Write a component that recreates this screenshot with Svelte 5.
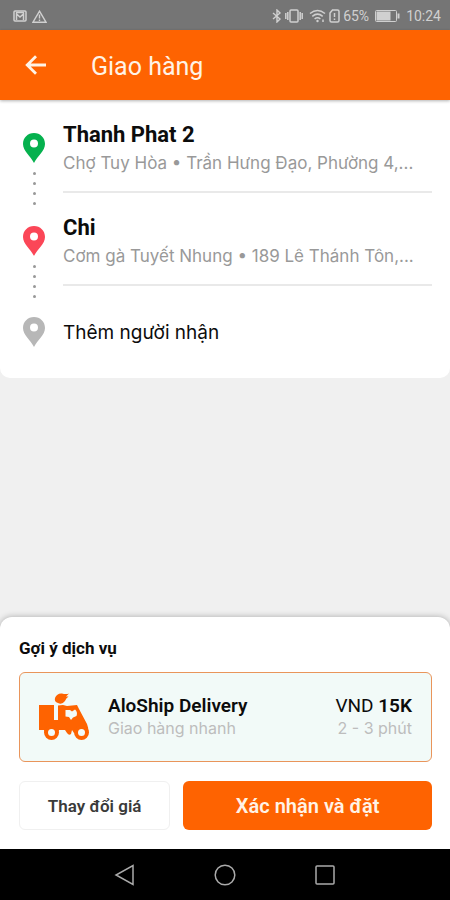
<script lang="ts">
  type Stop = { name: string; address: string; color: string };

  const stops: Stop[] = [
    { name: 'Thanh Phat 2', address: 'Chợ Tuy Hòa • Trần Hưng Đạo, Phường 4,...', color: '#05b14e' },
    { name: 'Chi', address: 'Cơm gà Tuyết Nhung • 189 Lê Thánh Tôn,...', color: '#fb4657' },
  ];

  const dots = [0, 1, 2, 3];
</script>

{#snippet pin(color: string)}
  <svg class="pin" viewBox="0 0 22 30" aria-hidden="true">
    <path
      fill={color}
      fill-rule="evenodd"
      d="M11 0C4.800 0 0 4.800 0 10.900C0 18 7.500 22.500 11 30C14.500 22.500 22 18 22 10.900C22 4.800 17.200 0 11 0ZM11 6.600a4 4 0 1 1 0 8a4 4 0 1 1 0-8Z"
    />
  </svg>
{/snippet}

<div class="screen">
  <div class="status-bar">
    <div class="status-group">
      <svg width="14" height="12" viewBox="0 0 14 12" fill="none" stroke="currentColor" stroke-width="1.5">
        <rect x="1" y="1" width="12" height="10" rx="1" />
        <path d="M3.500 10V4l3.500 3l3.500-3v6M3 2.500h8" />
      </svg>
      <svg width="15" height="13" viewBox="0 0 15 13" fill="none" stroke="currentColor" stroke-width="1.400">
        <path d="M7.500 1.200L14 12.200H1ZM7.500 4.500v4M7.500 9.500v1.500" />
      </svg>
    </div>
    <div class="status-group right">
      <svg width="10" height="14" viewBox="0 0 10 14" fill="none" stroke="currentColor" stroke-width="1.400">
        <path d="M1 4l7 6l-3 3V1l3 3l-7 6" />
      </svg>
      <svg width="18" height="14" viewBox="0 0 18 14" fill="none" stroke="currentColor" stroke-width="1.500">
        <rect x="5" y="1" width="8" height="12" rx="1" />
        <path d="M2.800 3v8M15.200 3v8M.8 4v6M17.200 4v6" />
      </svg>
      <svg class="wifi" width="17" height="14" viewBox="0 0 17 14" fill="none" stroke="currentColor" stroke-width="1.500">
        <path d="M1 4.500Q8.500-1.500 16 4.500M3.300 7.300Q8.500 3 13.700 7.300M5.600 10Q8.500 7.500 11.400 10M14 10.500v2.500" />
        <circle cx="8.500" cy="12" r="1.200" fill="currentColor" stroke="none" />
      </svg>
      <svg width="11" height="14" viewBox="0 0 11 14" fill="none" stroke="currentColor" stroke-width="1.500">
        <path d="M3.500 1h5a1.500 1.500 0 0 1 1.500 1.500v9a1.500 1.500 0 0 1-1.500 1.500h-6a1.500 1.500 0 0 1-1.500-1.500V4ZM5.500 4v4M5.500 9.500v1.500" />
      </svg>
      <span>65%</span>
      <svg class="battery" width="25" height="12" viewBox="0 0 25 12" fill="none" stroke="currentColor">
        <rect x=".5" y=".5" width="21" height="11" rx="1" />
        <rect x="2" y="2" width="13" height="8" fill="currentColor" />
        <path d="M23.500 3.500v5" stroke-width="2" />
      </svg>
      <span>10:24</span>
    </div>
  </div>

  <header class="app-bar">
    <button class="back" aria-label="Quay lại">
      <svg width="22" height="20" viewBox="0 0 22 20" fill="none" stroke="currentColor" stroke-width="2.800">
        <path d="M21 10H2.500M11 1.200L2.200 10L11 18.800" />
      </svg>
    </button>
    <h1>Giao hàng</h1>
  </header>

  <main class="stops">
    {#each stops as stop (stop.name)}
      <div class="stop">
        <div class="marker">
          {@render pin(stop.color)}
          <div class="dots">
            {#each dots as dot (dot)}
              <i></i>
            {/each}
          </div>
        </div>
        <div class="stop-info">
          <h2>{stop.name}</h2>
          <p>{stop.address}</p>
        </div>
      </div>
    {/each}
    <button class="add-stop">
      {@render pin('#b7b7b7')}
      <span>Thêm người nhận</span>
    </button>
  </main>

  <section class="sheet">
    <h3>Gợi ý dịch vụ</h3>
    <button class="service">
      <svg class="truck" viewBox="0 0 51 48" aria-hidden="true">
        <g fill="#fe6301">
          <path d="M1 12H16V27H20V12.500L25 12L29 13L39 12L41 16L49 31Q51 35 50 40H36L34 37L33 41Q31 43 29 40L27 37H21L19 40H7L6 37H1Z" />
          <circle cx="13.500" cy="39.500" r="7.500" />
          <circle cx="43.500" cy="39.500" r="7.500" />
          <path d="M17 5Q19 0 24 .5Q28 1.500 31 .5L28 3.500L30.500 3.500Q28 5 27 8Q24 12 20 10Q16 9 17 5Z" />
        </g>
        <path fill="#f2faf8" d="M27.500 17H32L34 18.500L37 16.500Q40 19 38.500 23L35 24.500L33 27L31 24L27.500 23.500Z" />
        <circle cx="13.500" cy="39.500" r="3.500" fill="#f2faf8" />
        <circle cx="43.500" cy="39.500" r="3.500" fill="#f2faf8" />
      </svg>
      <span class="service-name">
        <strong>AloShip Delivery</strong>
        <small>Giao hàng nhanh</small>
      </span>
      <span class="service-price">
        <span>VND <strong>15K</strong></span>
        <small>2 - 3 phút</small>
      </span>
    </button>
    <div class="actions">
      <button class="change">Thay đổi giá</button>
      <button class="confirm">Xác nhận và đặt</button>
    </div>
  </section>

  <nav class="nav-bar">
    <button aria-label="Back">
      <svg width="22" height="22" viewBox="0 0 22 22"><path d="M19 1.500v19L2 11Z" /></svg>
    </button>
    <button aria-label="Home">
      <svg width="22" height="22" viewBox="0 0 22 22"><circle cx="11" cy="11" r="9.800" /></svg>
    </button>
    <button aria-label="Recent">
      <svg width="22" height="22" viewBox="0 0 22 22"><rect x="2" y="2" width="18" height="18" rx="1" /></svg>
    </button>
  </nav>
</div>

<style>
  :global(body) {
    margin: 0;
  }
  .screen {
    min-height: 100vh;
    display: flex;
    flex-direction: column;
    background: #f0f0f0;
    font-family: Roboto, "Liberation Sans", sans-serif;
    color: #0c0c0c;
  }
  button {
    font: inherit;
    color: inherit;
    border: none;
    background: none;
    padding: 0;
    cursor: pointer;
  }
  svg {
    flex-shrink: 0;
  }
  h1,
  h2,
  h3,
  p {
    margin: 0;
  }

  /* Status bar */
  .status-bar {
    height: 30px;
    padding: 2px 9px 0 13px;
    box-sizing: border-box;
    display: flex;
    align-items: center;
    justify-content: space-between;
    background: #757575;
    color: #d0d0d0;
    font-size: 14px;
  }
  .status-group {
    display: flex;
    align-items: center;
    gap: 5px;
  }
  .status-group.right {
    gap: 3px;
  }
  .wifi {
    margin-left: 3px;
  }
  .battery {
    margin: 0 3px;
  }

  /* App bar */
  .app-bar {
    height: 70px;
    display: flex;
    align-items: center;
    gap: 44px;
    padding: 0 25px;
    background: #fe6301;
    color: #fff3e6;
    box-shadow: 0 1px 3px rgba(0, 0, 0, 0.3);
    z-index: 1;
  }
  .back {
    display: flex;
  }
  .app-bar h1 {
    font-size: 25px;
    font-weight: 400;
    line-height: 32px;
    padding-top: 4px;
  }

  /* Stops */
  .stops {
    background: #fff;
    border-radius: 0 0 10px 10px;
    padding: 0 18px 0 23px;
  }
  .stop {
    display: flex;
    gap: 18px;
  }
  .marker {
    width: 22px;
    padding-top: 33px;
    margin-bottom: -16px;
    flex-shrink: 0;
  }
  .pin {
    display: block;
    width: 22px;
    height: 30px;
  }
  .dots {
    display: flex;
    flex-direction: column;
    align-items: center;
    gap: 7px;
    padding-top: 9px;
  }
  .dots i {
    width: 3px;
    height: 3px;
    border-radius: 50%;
    background: #999;
  }
  .stop-info {
    flex: 1;
    min-width: 0;
    height: 93px;
    padding-top: 21px;
    box-sizing: border-box;
    border-bottom: 2px solid #e9e9e9;
  }
  .stop-info h2 {
    font-size: 22px;
    font-weight: 700;
    line-height: 28px;
  }
  .stop-info p {
    font-family: Inter, Roboto, sans-serif;
    font-size: 17px;
    line-height: 28px;
    color: #999;
    white-space: nowrap;
    overflow: hidden;
    text-overflow: ellipsis;
  }
  .add-stop {
    width: 100%;
    height: 92px;
    display: flex;
    align-items: center;
    gap: 18px;
    font-family: Inter, Roboto, sans-serif;
    font-size: 19px;
  }

  /* Bottom sheet */
  .sheet {
    margin-top: auto;
    padding: 17px 18px 19px 19px;
    background: #fff;
    border-radius: 12px 12px 0 0;
    box-shadow: 0 0 6px rgba(0, 0, 0, 0.3);
  }
  .sheet h3 {
    font-size: 17px;
    font-weight: 700;
    line-height: 28px;
  }
  .service {
    width: 100%;
    height: 90px;
    margin: 10px 0 19px;
    padding: 0 19px 0 18px;
    box-sizing: border-box;
    display: flex;
    align-items: center;
    gap: 19px;
    border: 1px solid #e9955b;
    border-radius: 6px;
    background: #f2faf8;
    font-size: 19px;
    line-height: 22px;
    text-align: left;
  }
  .truck {
    width: 51px;
    height: 48px;
  }
  .service strong {
    font-weight: 600;
  }
  .service-name,
  .service-price {
    display: flex;
    flex-direction: column;
  }
  .service-price {
    margin-left: auto;
    text-align: right;
  }
  .service small {
    font-family: Inter, Roboto, sans-serif;
    font-size: 16px;
    color: #bdbdbd;
  }
  .actions {
    display: flex;
    gap: 13px;
  }
  .actions button {
    height: 49px;
    border-radius: 6px;
    font-weight: 600;
  }
  .actions .change {
    flex: 3;
    border: 1px solid #f0f0f0;
    color: #3a3a3a;
    font-size: 17px;
  }
  .actions .confirm {
    flex: 5;
    background: #fe6301;
    color: #fff3e6;
    font-size: 20px;
  }

  /* Android navigation */
  .nav-bar {
    height: 51px;
    display: flex;
    align-items: center;
    justify-content: center;
    gap: 78px;
    background: #000;
    z-index: 1;
  }
  .nav-bar button {
    display: flex;
  }
  .nav-bar svg {
    fill: none;
    stroke: #aaa;
    stroke-width: 1.5;
  }
</style>
